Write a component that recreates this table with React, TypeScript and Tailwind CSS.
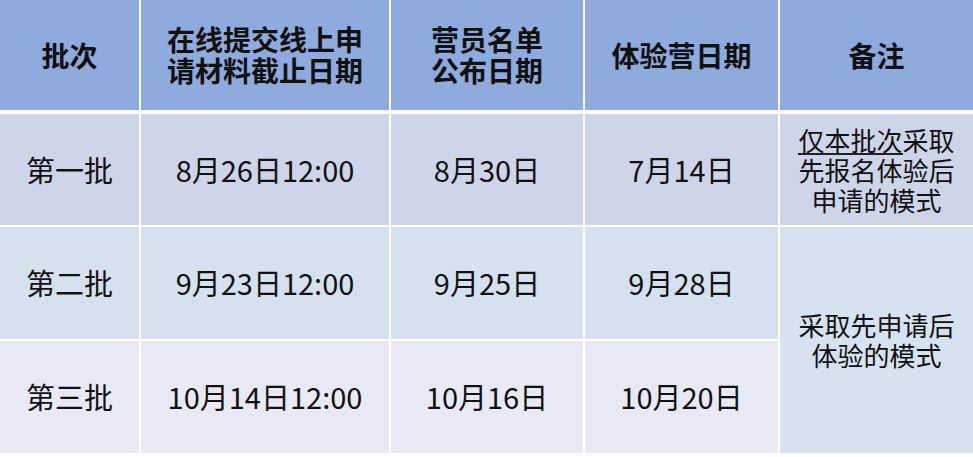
const font = { fontFamily: '"Noto Sans CJK SC", "Noto Sans", sans-serif' };

const rows = [
  { batch: "第一批", deadline: "8月26日12:00", list: "8月30日", camp: "7月14日", bg: "bg-[#cfd5e9]" },
  { batch: "第二批", deadline: "9月23日12:00", list: "9月25日", camp: "9月28日", bg: "bg-[#d6e1f0]" },
  { batch: "第三批", deadline: "10月14日12:00", list: "10月16日", camp: "10月20日", bg: "bg-[#e8e9f4]" },
];

function Head({ children }: { children: React.ReactNode }) {
  return (
    <div className="flex items-center justify-center bg-[#8faadc] text-center text-[28px] font-bold leading-[31px] text-[#111]">
      {children}
    </div>
  );
}

export default function App() {
  return (
    <div className="h-[457px] w-[973px] bg-white" style={font}>
      <div className="grid grid-cols-[139px_248px_192px_193px_193px] grid-rows-[110px_113px_112px_112px] gap-x-[2px] gap-y-[2px]">
        <Head>批次</Head>
        <Head>
          在线提交线上申
          <br />
          请材料截止日期
        </Head>
        <Head>
          营员名单
          <br />
          公布日期
        </Head>
        <Head>体验营日期</Head>
        <Head>备注</Head>

        {rows.map((r, i) => (
          <div key={r.batch} className="contents">
            <div className={`${i === 0 ? "mt-[2px]" : ""} flex items-center justify-center text-[29px] text-[#111] ${r.bg}`}>
              {r.batch}
            </div>
            <div className={`${i === 0 ? "mt-[2px]" : ""} flex items-center justify-center text-[29px] text-[#111] ${r.bg}`}>
              {r.deadline}
            </div>
            <div className={`${i === 0 ? "mt-[2px]" : ""} flex items-center justify-center text-[29px] text-[#111] ${r.bg}`}>
              {r.list}
            </div>
            <div className={`${i === 0 ? "mt-[2px]" : ""} flex items-center justify-center text-[29px] text-[#111] ${r.bg}`}>
              {r.camp}
            </div>
            {i === 0 && (
              <div className="mt-[2px] flex items-center justify-center bg-[#cfd5e9] text-center text-[26px] leading-[30px] text-[#111]">
                <div>
                  <span className="inline-block border-b-2 border-[#222] leading-[27px]">仅本批次</span>采取
                  <br />
                  先报名体验后
                  <br />
                  申请的模式
                </div>
              </div>
            )}
            {i === 1 && (
              <div className="row-span-2 flex items-center justify-center bg-[#d6e2f0] text-center text-[26px] leading-[30px] text-[#111]">
                <div>
                  采取先申请后
                  <br />
                  体验的模式
                </div>
              </div>
            )}
          </div>
        ))}
      </div>
    </div>
  );
}
